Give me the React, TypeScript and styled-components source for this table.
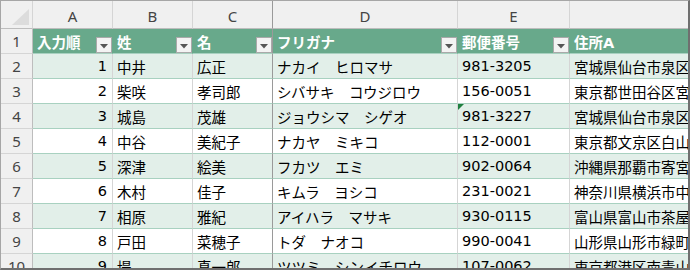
import React from 'react';
import styled, {createGlobalStyle} from 'styled-components';

type RowType = {
    no: string
    sei: string
    mei: string
    kana: string
    zip: string
    address: string
    warn?: boolean
}

const rows: RowType[] = [
    {no: '1', sei: '中井', mei: '広正', kana: 'ナカイ　ヒロマサ', zip: '981-3205', address: '宮城県仙台市泉区紫山'},
    {no: '2', sei: '柴咲', mei: '孝司郎', kana: 'シバサキ　コウジロウ', zip: '156-0051', address: '東京都世田谷区宮坂'},
    {no: '3', sei: '城島', mei: '茂雄', kana: 'ジョウシマ　シゲオ', zip: '981-3227', address: '宮城県仙台市泉区桂', warn: true},
    {no: '4', sei: '中谷', mei: '美紀子', kana: 'ナカヤ　ミキコ', zip: '112-0001', address: '東京都文京区白山'},
    {no: '5', sei: '深津', mei: '絵美', kana: 'フカツ　エミ', zip: '902-0064', address: '沖縄県那覇市寄宮'},
    {no: '6', sei: '木村', mei: '佳子', kana: 'キムラ　ヨシコ', zip: '231-0021', address: '神奈川県横浜市中区'},
    {no: '7', sei: '相原', mei: '雅紀', kana: 'アイハラ　マサキ', zip: '930-0115', address: '富山県富山市茶屋町'},
    {no: '8', sei: '戸田', mei: '菜穂子', kana: 'トダ　ナオコ', zip: '990-0041', address: '山形県山形市緑町'},
    {no: '9', sei: '堤', mei: '真一郎', kana: 'ツツミ　シンイチロウ', zip: '107-0062', address: '東京都港区南青山'},
]

const columns = ['A', 'B', 'C', 'D', 'E', 'F']
const headers = ['入力順', '姓', '名', 'フリガナ', '郵便番号', '住所A']

const GlobalStyle = createGlobalStyle`
  body {
    margin: 0;
    background: #ffffff;
    font-family: "DejaVu Sans", "Noto Sans CJK JP", sans-serif;
  }
`

const FilterButton = () => (
    <FilterBox>
        <svg width="8" height="5" viewBox="0 0 8 5">
            <polygon points="0,0 8,0 4,4.5" fill="#555"/>
        </svg>
    </FilterBox>
)

export default function App() {
    return (
        <>
            <GlobalStyle/>
            <Frame>
                <Sheet>
                    <Corner>
                        <svg width="18" height="17" viewBox="0 0 18 17">
                            <polygon points="17,0 17,16 0,16" fill="#dcdcdc"/>
                        </svg>
                    </Corner>
                    {columns.map((c, i) =>
                        <ColHead key={c} $frozen={i === 2}>{c}</ColHead>
                    )}

                    <RowHead>1</RowHead>
                    {headers.map((h, i) =>
                        <HeadCell key={h} $frozen={i === 2}>
                            <span>{h}</span>
                            {i < 5 && <FilterButton/>}
                        </HeadCell>
                    )}

                    {rows.map((r, i) => {
                        const band = i % 2 === 0
                        return (
                            <React.Fragment key={r.no}>
                                <RowHead>{i + 2}</RowHead>
                                <Cell $band={band} $align="right">{r.no}</Cell>
                                <Cell $band={band}>{r.sei}</Cell>
                                <Cell $band={band} $frozen>{r.mei}</Cell>
                                <Cell $band={band}>{r.kana}</Cell>
                                <Cell $band={band}>
                                    {r.warn && <WarnMark/>}
                                    {r.zip}
                                </Cell>
                                <Cell $band={band}>{r.address}</Cell>
                            </React.Fragment>
                        )
                    })}
                </Sheet>
            </Frame>
        </>
    )
}

const Frame = styled.div`
  width: 690px;
  height: 270px;
  box-sizing: border-box;
  border-top: 1px solid #a6a6a6;
  border-left: 1px solid #a6a6a6;
  border-right: 2px solid #6f6f6f;
  border-bottom: 2px solid #6f6f6f;
  overflow: hidden;
`

const Sheet = styled.div`
  display: grid;
  grid-template-columns: 32px 80px 80px 80px 185px 112px 244px;
  grid-template-rows: 28px repeat(10, 25px);
  font-size: 14.5px;
  color: #000;
`

const Corner = styled.div`
  background: #f0f0f0;
  border-right: 1px solid #d5d5d5;
  border-bottom: 1px solid #bdbdbd;
  display: flex;
  align-items: flex-end;
  justify-content: flex-end;
  padding: 0 2px 2px 0;
`

const ColHead = styled.div<{ $frozen?: boolean }>`
  background: #f0f0f0;
  color: #444;
  border-right: 1px solid ${p => p.$frozen ? '#9a9a9a' : '#d5d5d5'};
  border-bottom: 1px solid #bdbdbd;
  display: flex;
  align-items: center;
  justify-content: center;
  font-family: "Noto Sans", "Liberation Sans", sans-serif;
  font-size: 15px;
  padding-top: 2px;
`

const RowHead = styled.div`
  background: #f0f0f0;
  color: #444;
  border-right: 1px solid #bdbdbd;
  border-bottom: 1px solid #d5d5d5;
  display: flex;
  align-items: center;
  justify-content: center;
  font-family: "Noto Sans", "Liberation Sans", sans-serif;
  font-size: 15px;
`

const HeadCell = styled.div<{ $frozen?: boolean }>`
  background: #68a98b;
  color: #fff;
  font-weight: 700;
  border-right: 1px solid ${p => p.$frozen ? '#9a9a9a' : '#68a98b'};
  border-bottom: 1px solid #a8d1c0;
  display: flex;
  align-items: center;
  justify-content: space-between;
  padding-left: 4px;
  white-space: nowrap;
  overflow: hidden;
`

const FilterBox = styled.div`
  align-self: flex-end;
  flex-shrink: 0;
  width: 16px;
  height: 16px;
  box-sizing: border-box;
  background: #f3f3f3;
  border: 1px solid #a9a9a9;
  display: flex;
  align-items: center;
  justify-content: center;
  padding-top: 2px;
`

const Cell = styled.div<{ $band?: boolean, $align?: 'left' | 'right', $frozen?: boolean }>`
  position: relative;
  background: ${p => p.$band ? '#e2efe9' : '#ffffff'};
  border-right: 1px solid ${p => p.$frozen ? '#9a9a9a' : '#d5d5d5'};
  border-bottom: 1px solid #a8d1c0;
  display: flex;
  align-items: center;
  justify-content: ${p => p.$align === 'right' ? 'flex-end' : 'flex-start'};
  padding: 0 ${p => p.$align === 'right' ? '5px' : '0'} 0 ${p => p.$align === 'right' ? '0' : '4px'};
  white-space: nowrap;
  overflow: hidden;
`

const WarnMark = styled.div`
  position: absolute;
  top: 0;
  left: 0;
  width: 0;
  height: 0;
  border-top: 6px solid #208040;
  border-right: 6px solid transparent;
`
